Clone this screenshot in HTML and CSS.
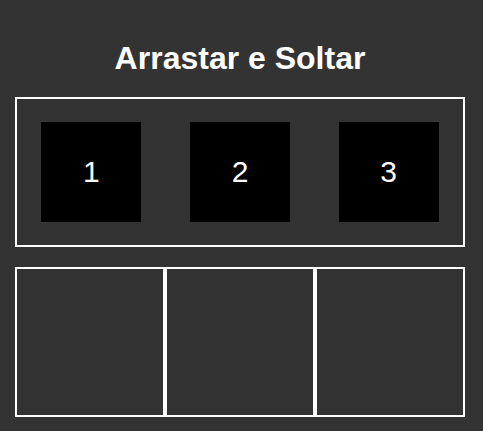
FILE: index.html
```html
<!DOCTYPE html>
<html lang="pt">
<head>
<meta charset="utf-8">
<title>Arrastar e Soltar</title>
<link rel="stylesheet" href="styles.css">
</head>
<body>
<div class="app">
  <h1 class="title">Arrastar e Soltar</h1>
  <div class="source">
    <div class="item">1</div>
    <div class="item">2</div>
    <div class="item">3</div>
  </div>
  <div class="targets">
    <div class="slot"></div>
    <div class="slot"></div>
    <div class="slot"></div>
  </div>
</div>
</body>
</html>
```
FILE: styles.css
```css
html, body {
  margin: 0;
  padding: 0;
  background: #333333;
  font-family: "Liberation Sans", Arial, sans-serif;
  color: #ffffff;
}
.app {
  width: 450px;
  margin-left: 15px;
  padding-top: 40px;
}
.title {
  margin: 0 0 20px 0;
  font-size: 32px;
  line-height: 37px;
  font-weight: bold;
  text-align: center;
}
.source {
  box-sizing: border-box;
  height: 150px;
  border: 2px solid #ffffff;
  display: flex;
  justify-content: space-around;
  align-items: center;
}
.item {
  width: 100px;
  height: 100px;
  background: #000000;
  display: flex;
  align-items: center;
  justify-content: center;
  font-size: 30px;
}
.targets {
  margin-top: 20px;
  display: flex;
}
.slot {
  box-sizing: border-box;
  width: 150px;
  height: 150px;
  border: 2px solid #ffffff;
}
```
